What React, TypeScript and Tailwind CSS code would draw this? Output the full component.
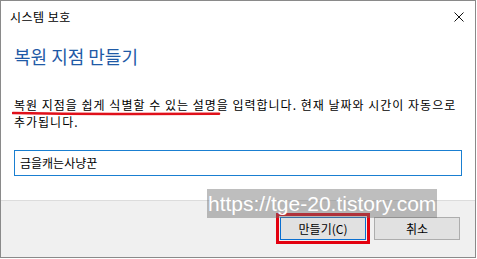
import React from "react";

const ko = { fontFamily: '"Noto Sans CJK KR", "Noto Sans", sans-serif' };

export default function App() {
	return (
		<div className="relative w-[477px] h-[259px] bg-white overflow-hidden" style={ko}>
			<div className="flex flex-col w-[476px] h-[258px] border border-[#8a8a8a] bg-white">
				{/* title bar */}
				<div className="flex items-center justify-between h-[31px] pl-[9px] pr-[11px] shrink-0">
					<span className="text-[12px] leading-none text-black tracking-[0.5px]">시스템 보호</span>
					<svg width="10" height="10" viewBox="0 0 10 10" className="mt-[1px]">
						<path d="M0.5 0.5 L9.5 9.5 M9.5 0.5 L0.5 9.5" stroke="#111" strokeWidth="1" />
					</svg>
				</div>

				{/* body */}
				<div className="flex flex-col px-[13px] flex-1">
					<h1 className="mt-[11px] text-[18px] leading-[26px] text-[#1f5aa6] font-normal">복원 지점 만들기</h1>
					<div className="relative mt-[27px]">
						<p className="text-[12px] leading-[17px] text-black tracking-[1px] whitespace-nowrap">
							복원 지점을 쉽게 식별할 수 있는 설명을 입력합니다. 현재 날짜와 시간이 자동으로
							<br />
							추가됩니다.
						</p>
						<svg className="absolute left-[-2px] top-[15px]" width="210" height="5" viewBox="0 0 210 5">
							<path d="M1 2 Q60 3.2 120 3 T207 2.8" stroke="#e0101a" strokeWidth="2.6" fill="none" strokeLinecap="round" />
						</svg>
					</div>
					<div className="mt-[20px] h-[26px] w-[448px] border border-[#1a7fd1] flex items-center px-[5px]">
						<span className="text-[12px] text-black leading-none">금을캐는사냥꾼</span>
					</div>
				</div>

				{/* footer */}
				<div className="h-[57px] shrink-0 border-t border-[#dcdcdc] bg-[#f0f0f0] flex justify-end items-start pt-[16px] pr-[15px] gap-[8px]">
					<div className="relative">
						<div className="absolute -inset-[4px] border-[3px] border-[#e3000f]" />
						<button className="w-[86px] h-[23px] border border-[#0a6fd0] bg-[#e1e1e1] text-[12px] text-black leading-none flex items-center justify-center">
							만들기(C)
						</button>
					</div>
					<button className="w-[86px] h-[23px] border border-[#adadad] bg-[#e1e1e1] text-[12px] text-black leading-none flex items-center justify-center">
						취소
					</button>
				</div>
			</div>

			{/* watermark */}
			<div
				className="absolute left-[207px] top-[189px] w-[230px] h-[29px] bg-[rgba(110,110,110,0.45)] flex items-center pl-[1px] text-white text-[21px] leading-none whitespace-nowrap"
				style={{ fontFamily: '"Liberation Sans", Arial, sans-serif' }}
			>
				https://tge-20.tistory.com
			</div>
		</div>
	);
}
